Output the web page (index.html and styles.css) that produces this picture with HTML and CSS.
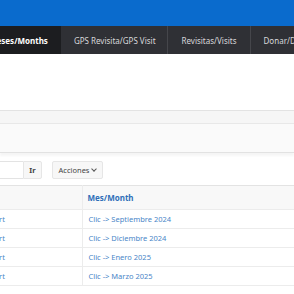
FILE: index.html
```html
<!DOCTYPE html>
<html lang="es">
<head>
    <meta charset="UTF-8">
    <meta name="viewport" content="width=device-width, initial-scale=1.0">
    <title>Meses/Months</title>
    <link rel="stylesheet" href="styles.css">
</head>
<body>
    <header class="top-bar"></header>

    <nav class="tabs">
        <ul>
            <li class="tab active"><a href="#">Meses/Months</a></li>
            <li class="tab"><a href="#">GPS Revisita/GPS Visit</a></li>
            <li class="tab"><a href="#">Revisitas/Visits</a></li>
            <li class="tab"><a href="#">Donar/Donate</a></li>
        </ul>
    </nav>

    <main>
        <div class="region-head"></div>
        <div class="region-body"></div>

        <div class="toolbar">
            <div class="search">
                <input type="text" class="search-input">
                <button class="btn btn-go">Ir</button>
            </div>
            <button class="btn btn-actions">Acciones <span class="chev"></span></button>
        </div>

        <table class="report">
            <thead>
                <tr>
                    <th class="col-edit"></th>
                    <th><a href="#">Mes/Month</a></th>
                </tr>
            </thead>
            <tbody>
                <tr>
                    <td class="col-edit"><a href="#">Start</a></td>
                    <td><a href="#">Clic -&gt; Septiembre 2024</a></td>
                </tr>
                <tr>
                    <td class="col-edit"><a href="#">Start</a></td>
                    <td><a href="#">Clic -&gt; Diciembre 2024</a></td>
                </tr>
                <tr>
                    <td class="col-edit"><a href="#">Start</a></td>
                    <td><a href="#">Clic -&gt; Enero 2025</a></td>
                </tr>
                <tr>
                    <td class="col-edit"><a href="#">Start</a></td>
                    <td><a href="#">Clic -&gt; Marzo 2025</a></td>
                </tr>
            </tbody>
        </table>
    </main>
</body>
</html>
```
FILE: styles.css
```css
* {
    margin: 0;
    padding: 0;
    box-sizing: border-box;
}

body {
    font-family: 'Noto Sans', 'Open Sans', sans-serif;
    color: #404040;
    background: #fff;
    overflow: hidden;
}

/* Top bar */
.top-bar {
    height: 26px;
    background: #0a6bcd;
}

/* Tabs */
.tabs {
    height: 28px;
    background: #2f3035;
}

.tabs ul {
    list-style: none;
    display: flex;
    height: 100%;
    margin-left: -24px;
}

.tab {
    border-right: 1px solid #45464b;
    display: flex;
    align-items: center;
    padding: 0 12px 0 13px;
}

.tab a {
    color: #d8d8db;
    text-decoration: none;
    font-size: 8px;
    white-space: nowrap;
}

.tab:nth-child(2) {
    padding-right: 11px;
}

.tab:nth-child(3) {
    padding: 0 13px 0 14px;
}

.tab.active {
    background: #1c1d20;
    border-right-color: #1c1d20;
}

.tab.active a {
    color: #fff;
    font-weight: bold;
}

/* Regions */
main {
    padding-top: 56px;
}

.region-head {
    height: 14px;
    border-top: 1px solid #e3e3e3;
    border-bottom: 1px solid #e8e8e8;
    background: #f6f6f6;
}

.region-body {
    height: 29px;
    background: #fafafa;
    border-bottom: 1px solid #e2e2e2;
    box-shadow: 0 3px 2px rgba(0,0,0,0.04);
}

/* Toolbar */
.toolbar {
    display: flex;
    align-items: center;
    gap: 10px;
    height: 32px;
    padding-top: 2px;
}

.search {
    display: flex;
    margin-left: -10px;
}

.search-input {
    width: 33px;
    height: 18px;
    border: 1px solid #e3e3e3;
    border-right: none;
    background: #fff;
}

.btn {
    height: 18px;
    border: 1px solid #e6e6e6;
    border-radius: 2px;
    background: #f7f7f7;
    color: #444;
    font-family: inherit;
    font-size: 7.5px;
}

.btn-go {
    width: 19px;
    font-weight: bold;
    border-radius: 0 2px 2px 0;
}

.btn-actions {
    width: 51px;
    display: flex;
    align-items: center;
    justify-content: center;
    gap: 3px;
}

.chev {
    width: 4px;
    height: 4px;
    border-right: 1px solid #555;
    border-bottom: 1px solid #555;
    transform: rotate(45deg);
    margin-top: -3px;
}

/* Report table */
.report {
    border-collapse: collapse;
    width: 340px;
    margin-left: -18px;
    border-top: 1px solid #e3e3e3;
}

.report th,
.report td {
    text-align: left;
    border-bottom: 1px solid #ececec;
    border-right: 1px solid #ececec;
    white-space: nowrap;
}

.report th {
    height: 24px;
    background: #f8f8f8;
    font-size: 8px;
    padding-left: 5px;
}

.report th a {
    color: #2f6fb8;
    text-decoration: none;
}

.report td {
    height: 19px;
    font-size: 7.5px;
    padding-left: 6px;
}

.report td a {
    color: #4a86c8;
    text-decoration: none;
}

.report .col-edit {
    width: 100px;
}
```
